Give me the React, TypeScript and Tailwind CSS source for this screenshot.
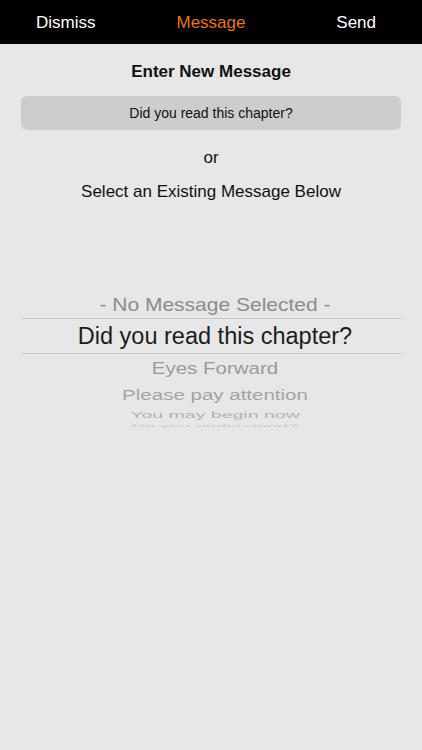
const font = { fontFamily: '"Liberation Sans", Arial, sans-serif' };

const wheel = [
  { label: '- No Message Selected -', h: 'h-[30px]', text: 'text-[21px] text-[#8c8c8c]', t: 'scale-y-[0.9]' },
  { label: 'Did you read this chapter?', h: 'h-[36px]', text: 'text-[23.5px] text-[#1c1c1c]', t: '', selected: true },
  { label: 'Eyes Forward', h: 'h-[27px]', text: 'text-[20.5px] text-[#9a9a9a]', t: 'scale-y-[0.85]' },
  { label: 'Please pay attention', h: 'h-[26px]', text: 'text-[20.5px] text-[#a4a4a4]', t: 'scale-y-[0.7]' },
  { label: 'You may begin now', h: 'h-[14px]', text: 'text-[19.5px] text-[#b2b2b2]', t: 'scale-y-[0.5]' },
  { label: 'Do you understand?', h: 'h-[7px]', text: 'text-[18.5px] text-[#cacaca]', t: 'scale-y-[0.22]' },
];

export default function App() {
  return (
    <div className="min-h-[750px] w-full bg-[#e7e7e7] flex flex-col" style={font}>
      {/* Top bar */}
      <div className="h-[44px] pt-[2px] bg-black grid grid-cols-3 items-center text-[17px]">
        <button className="text-left pl-[36px] text-white">Dismiss</button>
        <button className="text-center text-[#e8731e]">Message</button>
        <button className="text-right pr-[46px] text-white">Send</button>
      </div>

      <div className="flex flex-col items-center">
        <h2 className="mt-[18px] text-[17px] leading-[20px] font-bold text-[#111]">Enter New Message</h2>

        <div className="mt-[14px] w-[380px] h-[34px] pt-[1px] rounded-[6px] bg-[#cdcdcd] flex items-center justify-center text-[14px] text-[#111]">
          Did you read this chapter?
        </div>

        <p className="mt-[18px] text-[17px] leading-[20px] text-[#111]">or</p>
        <p className="mt-[14px] text-[17px] leading-[20px] text-[#111]">Select an Existing Message Below</p>

        {/* Picker wheel */}
        <div className="mt-[86px] w-[380px] flex flex-col">
          {wheel.map((row) => (
            <div
              key={row.label}
              className={`${row.h} pl-[8px] pt-[2px] flex items-center justify-center overflow-visible ${
                row.selected ? 'border-y border-[#c6c6c6]' : ''
              }`}
            >
              <span className={`${row.text} ${row.t} leading-none whitespace-nowrap`}>{row.label}</span>
            </div>
          ))}
        </div>
      </div>
    </div>
  );
}
